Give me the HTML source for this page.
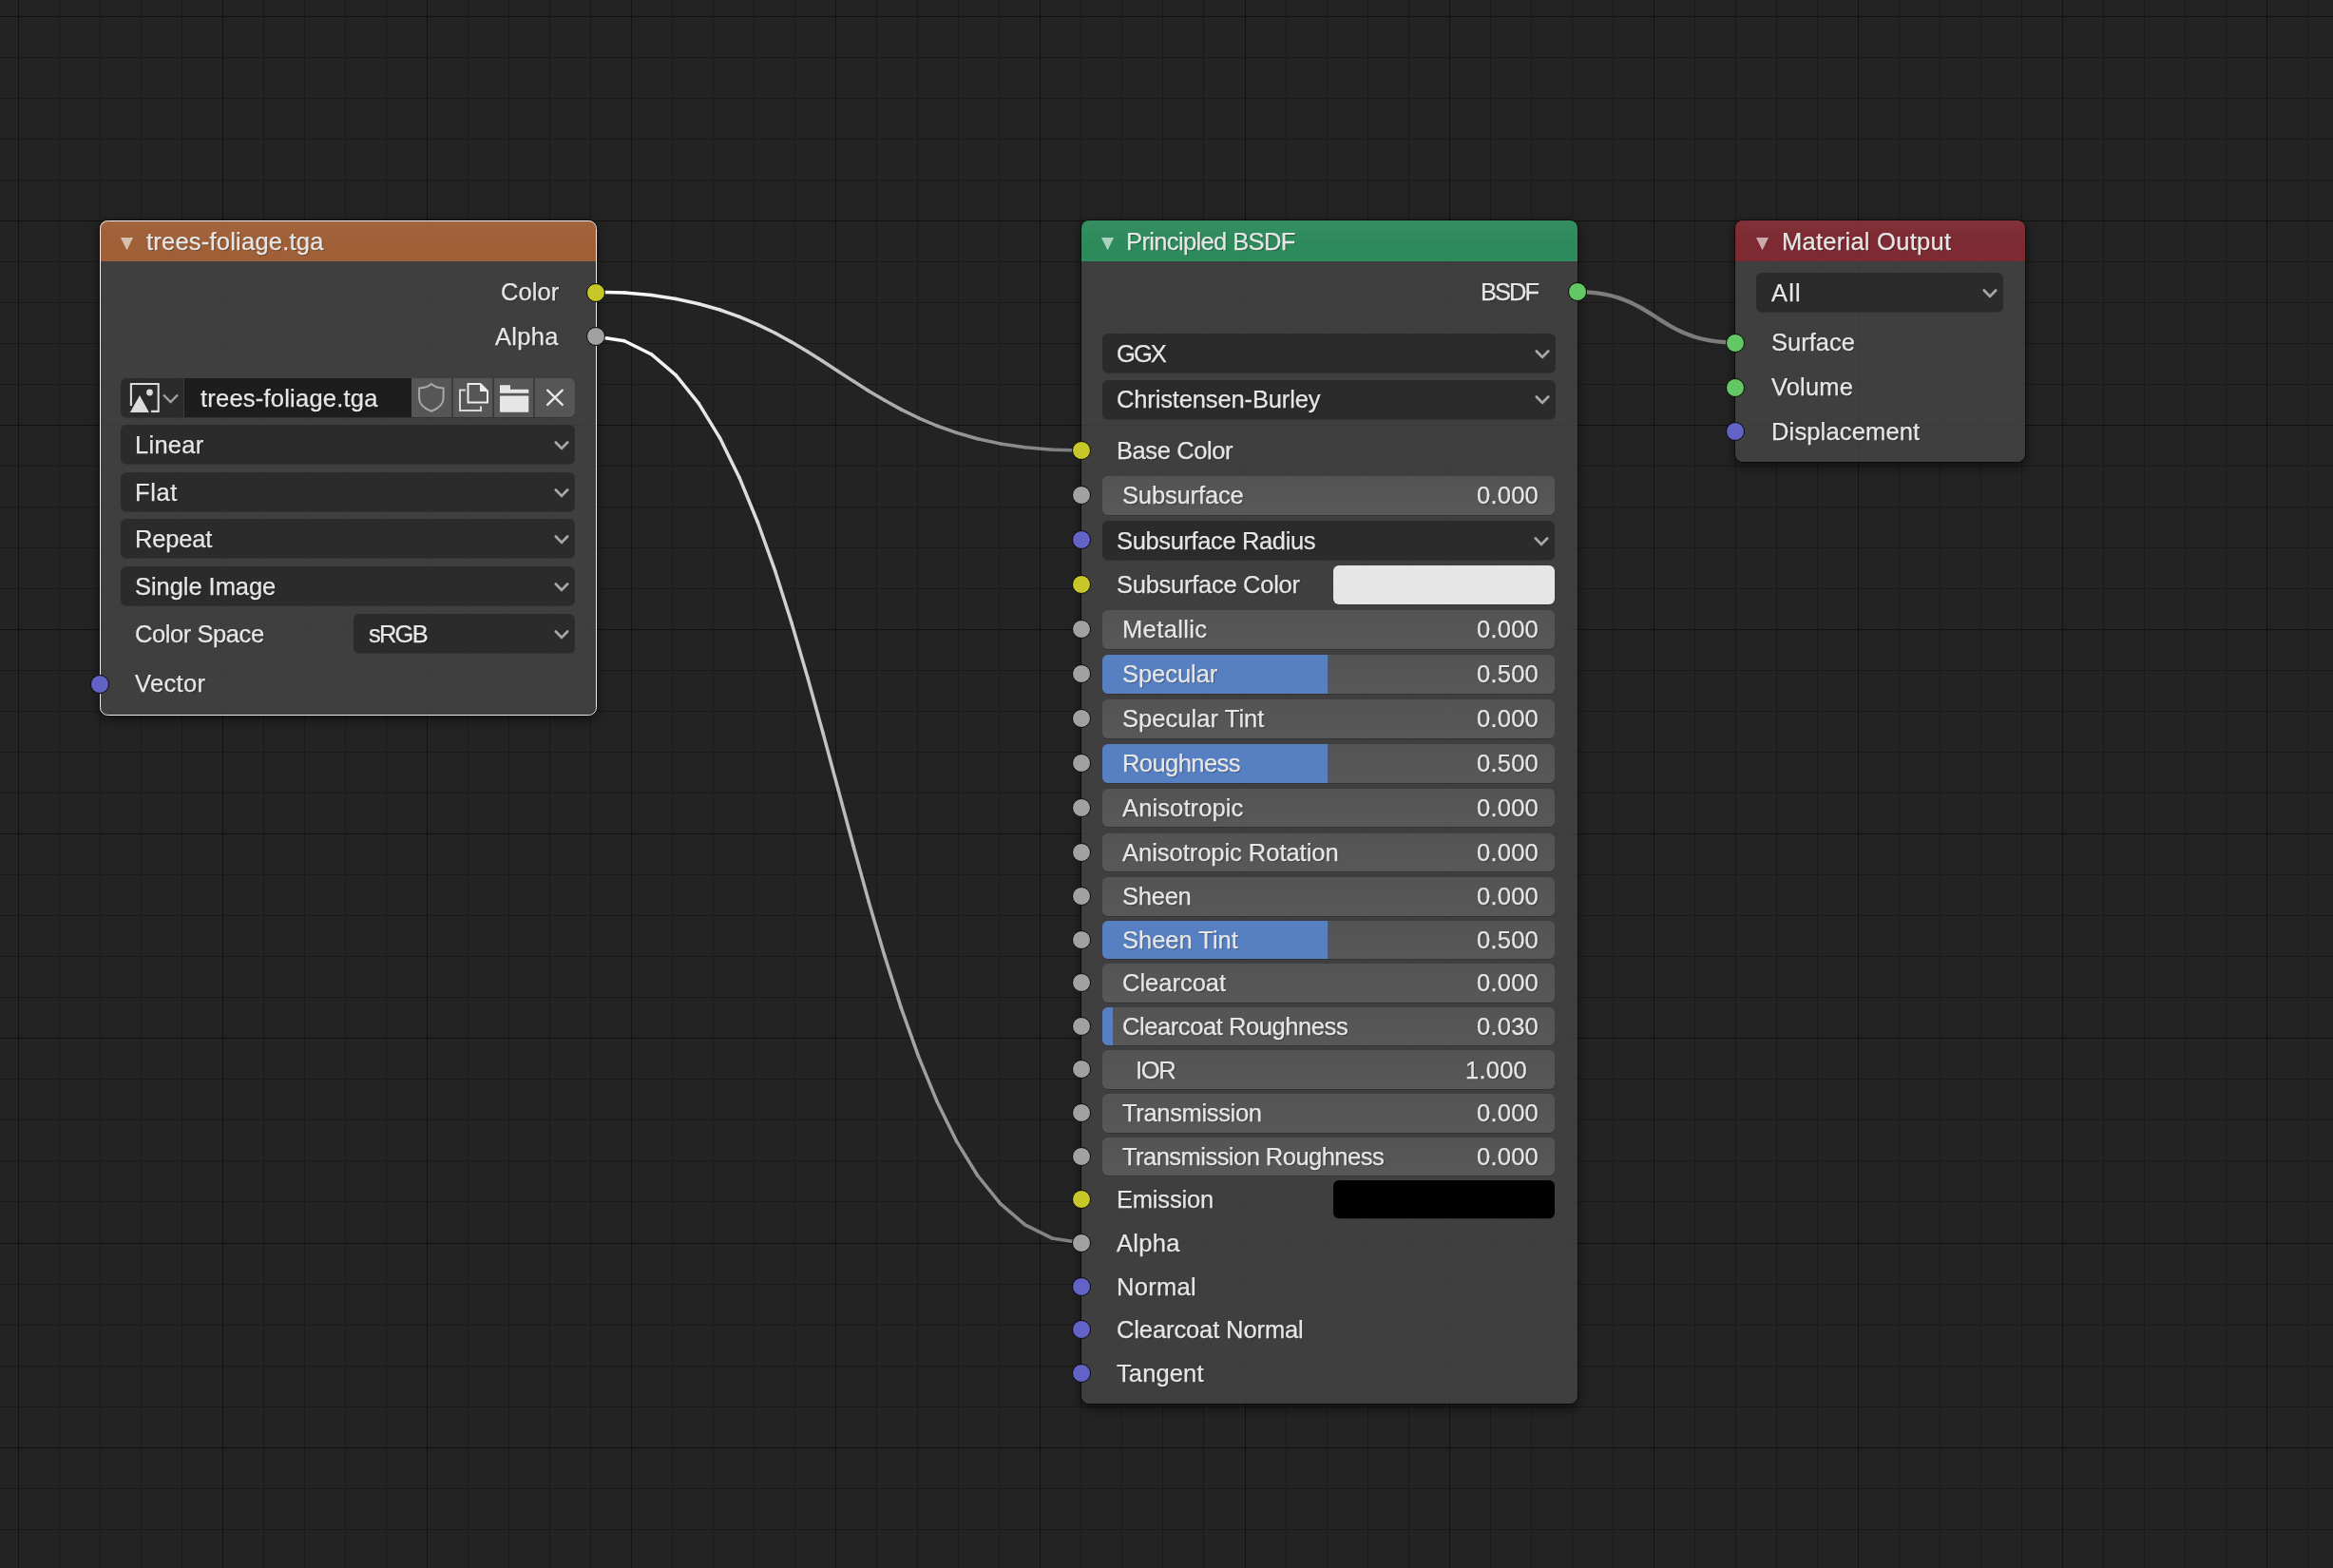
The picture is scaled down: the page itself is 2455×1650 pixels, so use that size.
<!DOCTYPE html><html><head><meta charset="utf-8"><style>
html,body{margin:0;padding:0;width:2455px;height:1650px;overflow:hidden;background:#232323;}
*{box-sizing:border-box;}
.a{position:absolute;}
.t{position:absolute;font-family:"Liberation Sans",sans-serif;font-size:25.5px;letter-spacing:0.2px;color:#e6e6e6;white-space:nowrap;line-height:40px;height:40px;text-shadow:1px 1px 1px rgba(0,0,0,0.35);will-change:transform;-webkit-text-stroke:0.25px #e6e6e6;}
.node{position:absolute;border-radius:8px;box-shadow:0 0 0 1px rgba(0,0,0,0.45),0 4px 10px 2px rgba(0,0,0,0.42);}
.hdr{position:absolute;left:0;top:0;right:0;height:43.4px;border-radius:8px 8px 0 0;}
.bdy{position:absolute;left:0;top:43.4px;right:0;bottom:0;border-radius:0 0 8px 8px;background:rgba(70,70,70,0.8);}
.menu{position:absolute;background:#2b2b2b;border-radius:6px;box-shadow:0 1px 0 rgba(0,0,0,0.18);}
.sl{position:absolute;background:linear-gradient(#545454,#585858);border-radius:6px;overflow:hidden;box-shadow:0 1px 0 rgba(0,0,0,0.18);}
.fill{position:absolute;left:0;top:0;bottom:0;background:#5680c2;}
.sock{position:absolute;width:20px;height:20px;border-radius:50%;border:1.6px solid #0a0a0a;}
.chev{position:absolute;width:16px;height:10px;}

</style></head><body>
<svg class="a" style="left:0;top:0" width="2455" height="1650" shape-rendering="crispEdges"><path d="M62.5 0V1650M105.5 0V1650M148.5 0V1650M191.5 0V1650M277.5 0V1650M320.5 0V1650M363.5 0V1650M406.5 0V1650M492.5 0V1650M535.5 0V1650M578.5 0V1650M621.5 0V1650M707.5 0V1650M750.5 0V1650M793.5 0V1650M836.5 0V1650M922.5 0V1650M965.5 0V1650M1008.5 0V1650M1051.5 0V1650M1137.5 0V1650M1180.5 0V1650M1223.5 0V1650M1266.5 0V1650M1353.5 0V1650M1396.5 0V1650M1439.5 0V1650M1482.5 0V1650M1568.5 0V1650M1611.5 0V1650M1654.5 0V1650M1697.5 0V1650M1783.5 0V1650M1826.5 0V1650M1869.5 0V1650M1912.5 0V1650M1998.5 0V1650M2041.5 0V1650M2084.5 0V1650M2127.5 0V1650M2213.5 0V1650M2256.5 0V1650M2299.5 0V1650M2342.5 0V1650M2428.5 0V1650M0 60.5H2455M0 103.5H2455M0 146.5H2455M0 189.5H2455M0 275.5H2455M0 318.5H2455M0 361.5H2455M0 404.5H2455M0 490.5H2455M0 533.5H2455M0 576.5H2455M0 619.5H2455M0 705.5H2455M0 748.5H2455M0 791.5H2455M0 834.5H2455M0 920.5H2455M0 963.5H2455M0 1006.5H2455M0 1049.5H2455M0 1135.5H2455M0 1178.5H2455M0 1221.5H2455M0 1264.5H2455M0 1351.5H2455M0 1394.5H2455M0 1437.5H2455M0 1480.5H2455M0 1566.5H2455M0 1609.5H2455" stroke="#1a1a1a" stroke-width="1"/><path d="M19.5 0V1650M234.5 0V1650M449.5 0V1650M664.5 0V1650M879.5 0V1650M1094.5 0V1650M1310.5 0V1650M1525.5 0V1650M1740.5 0V1650M1955.5 0V1650M2170.5 0V1650M2385.5 0V1650M0 17.5H2455M0 232.5H2455M0 447.5H2455M0 662.5H2455M0 877.5H2455M0 1092.5H2455M0 1308.5H2455M0 1523.5H2455" stroke="#121212" stroke-width="1"/></svg>
<div class="node" style="left:105px;top:232px;width:522px;height:520px;"><div class="hdr" style="background:linear-gradient(rgba(255,255,255,0.035),rgba(255,255,255,0) 60%),rgba(176,104,58,0.88)"></div><div class="bdy"></div></div>
<div class="a" style="left:104.5px;top:231.5px;width:523px;height:521px;border:1.6px solid #ececec;border-radius:8.5px"></div>
<svg class="a" style="left:126.5px;top:249.7px" width="13.0" height="13.300000000000011"><path d="M0 0H13.0L6.5 13.300000000000011Z" fill="rgba(255,255,255,0.6)"/></svg>
<div class="t" style="left:153.70px;top:233.5px;letter-spacing:0.22px;">trees-foliage.tga</div>
<div class="t" style="right:1866.44px;top:287.3px;letter-spacing:0.06px;">Color</div>
<div class="t" style="right:1867.22px;top:333.9px;letter-spacing:0.28px;">Alpha</div>
<div class="a" style="left:127px;top:398px;width:478px;height:41px;border-radius:6px;overflow:hidden;box-shadow:0 1px 0 rgba(0,0,0,0.18)"><div class="a" style="left:0;top:0;width:66px;height:41px;background:#2b2b2b"></div><div class="a" style="left:66px;top:0;width:1px;height:41px;background:#3a3a3a"></div><div class="a" style="left:67px;top:0;width:239px;height:41px;background:#1d1d1d"></div><div class="a" style="left:306px;top:0;width:42px;height:41px;background:#565656"></div><div class="a" style="left:349px;top:0;width:42px;height:41px;background:#565656"></div><div class="a" style="left:392px;top:0;width:42px;height:41px;background:#565656"></div><div class="a" style="left:435px;top:0;width:43px;height:41px;background:#565656"></div><div class="a" style="left:349px;top:0;width:1px;height:41px;background:#3a3a3a"></div><div class="a" style="left:392px;top:0;width:1px;height:41px;background:#3a3a3a"></div><div class="a" style="left:435px;top:0;width:1px;height:41px;background:#3a3a3a"></div></div>
<svg class="a" style="left:130px;top:398px" width="66" height="41"><path d="M7.9 28.9 V6 H36.7 V34.9 H29" fill="none" stroke="#dcdcdc" stroke-width="2.1"/><path d="M6.9 35.9 L17 18.1 L26.9 35.9 Z" fill="#dcdcdc"/><circle cx="27.5" cy="15" r="3.4" fill="#dcdcdc"/><path d="M42 17.5 L49.5 25 L57 17.5" fill="none" stroke="#a0a0a0" stroke-width="2.4"/></svg>
<div class="t" style="left:210.80px;top:398.5px;letter-spacing:0.22px;">trees-foliage.tga</div>
<svg class="a" style="left:433px;top:398px" width="172" height="41"><path d="M20.9 6 C17.5 9 13 10.3 8.1 10.5 V21 C8.1 27.5 14 32 20.9 34.7 C27.8 32 33.6 27.5 33.6 21 V10.5 C28.8 10.3 24.3 9 20.9 6 Z" fill="none" stroke="#a8a8a8" stroke-width="2"/><path d="M57 12.6 H51 V34 H73 V29.5" fill="none" stroke="#d8d8d8" stroke-width="2"/><path d="M59.5 6 H72.5 L80 13.5 V25.5 H59.5 Z" fill="none" stroke="#ececec" stroke-width="2"/><path d="M72 6 L80 14 H72 Z" fill="#ececec"/><path d="M93 7.3 H104 V11.7 H123.3 V15.8 H93 Z" fill="#e6e6e6"/><rect x="93" y="18.4" width="30.3" height="17.3" rx="0.8" fill="#e6e6e6"/><path d="M143.2 12.7 L158.7 27.9 M158.7 12.7 L143.2 27.9" stroke="#e6e6e6" stroke-width="2.4" stroke-linecap="round"/></svg>
<div class="menu" style="left:127px;top:447px;width:478px;height:41px"></div>
<div class="t" style="left:141.60px;top:447.5px;letter-spacing:0.27px;">Linear</div>
<svg class="a" style="left:581.40px;top:461.50px" width="20" height="14"><path d="M3.8 3.5 L10 9.9 L16.2 3.5" fill="none" stroke="#a8a8a8" stroke-width="2.7" stroke-linecap="round" stroke-linejoin="miter"/></svg>
<div class="menu" style="left:127px;top:497px;width:478px;height:41px"></div>
<div class="t" style="left:141.60px;top:497.5px;letter-spacing:0.62px;">Flat</div>
<svg class="a" style="left:581.40px;top:511.50px" width="20" height="14"><path d="M3.8 3.5 L10 9.9 L16.2 3.5" fill="none" stroke="#a8a8a8" stroke-width="2.7" stroke-linecap="round" stroke-linejoin="miter"/></svg>
<div class="menu" style="left:127px;top:546px;width:478px;height:41px"></div>
<div class="t" style="left:141.60px;top:546.5px;letter-spacing:-0.16px;">Repeat</div>
<svg class="a" style="left:581.40px;top:560.50px" width="20" height="14"><path d="M3.8 3.5 L10 9.9 L16.2 3.5" fill="none" stroke="#a8a8a8" stroke-width="2.7" stroke-linecap="round" stroke-linejoin="miter"/></svg>
<div class="menu" style="left:127px;top:596px;width:478px;height:41px"></div>
<div class="t" style="left:141.60px;top:596.5px;letter-spacing:-0.05px;">Single Image</div>
<svg class="a" style="left:581.40px;top:610.50px" width="20" height="14"><path d="M3.8 3.5 L10 9.9 L16.2 3.5" fill="none" stroke="#a8a8a8" stroke-width="2.7" stroke-linecap="round" stroke-linejoin="miter"/></svg>
<div class="t" style="left:141.60px;top:646.5px;letter-spacing:-0.42px;">Color Space</div>
<div class="menu" style="left:372px;top:646px;width:233px;height:41px"></div>
<div class="t" style="left:388.20px;top:646.5px;letter-spacing:-1.79px;">sRGB</div>
<svg class="a" style="left:581.40px;top:660.50px" width="20" height="14"><path d="M3.8 3.5 L10 9.9 L16.2 3.5" fill="none" stroke="#a8a8a8" stroke-width="2.7" stroke-linecap="round" stroke-linejoin="miter"/></svg>
<div class="node" style="left:1137.5px;top:232px;width:522.0px;height:1244.5px;"><div class="hdr" style="background:linear-gradient(rgba(255,255,255,0.035),rgba(255,255,255,0) 60%),rgba(47,152,99,0.88)"></div><div class="bdy"></div></div>
<svg class="a" style="left:1159.3999999999999px;top:249.7px" width="13.0" height="13.300000000000011"><path d="M0 0H13.0L6.5 13.300000000000011Z" fill="rgba(255,255,255,0.6)"/></svg>
<div class="t" style="left:1184.90px;top:233.5px;letter-spacing:-0.63px;">Principled BSDF</div>
<div class="t" style="right:837.51px;top:287px;letter-spacing:-2.01px;">BSDF</div>
<div class="menu" style="left:1160px;top:351px;width:477px;height:41px"></div>
<div class="t" style="left:1175.20px;top:351.5px;letter-spacing:-1.95px;">GGX</div>
<svg class="a" style="left:1613.40px;top:365.50px" width="20" height="14"><path d="M3.8 3.5 L10 9.9 L16.2 3.5" fill="none" stroke="#a8a8a8" stroke-width="2.7" stroke-linecap="round" stroke-linejoin="miter"/></svg>
<div class="menu" style="left:1160px;top:400px;width:477px;height:40.5px"></div>
<div class="t" style="left:1175.20px;top:400.25px;letter-spacing:-0.14px;">Christensen-Burley</div>
<svg class="a" style="left:1613.40px;top:414.25px" width="20" height="14"><path d="M3.8 3.5 L10 9.9 L16.2 3.5" fill="none" stroke="#a8a8a8" stroke-width="2.7" stroke-linecap="round" stroke-linejoin="miter"/></svg>
<div class="t" style="left:1175.20px;top:454.1px;letter-spacing:-0.41px;">Base Color</div>
<div class="sl" style="left:1160px;top:500.90000000000003px;width:476px;height:40.69999999999999px"></div>
<div class="t" style="left:1181.20px;top:501.25px;letter-spacing:-0.14px;">Subsurface</div>
<div class="t" style="right:835.86px;top:501.25px;letter-spacing:0.24px;">0.000</div>
<div class="menu" style="left:1160px;top:548.3px;width:476px;height:40.700000000000045px"></div>
<div class="t" style="left:1175.20px;top:548.65px;letter-spacing:-0.37px;">Subsurface Radius</div>
<svg class="a" style="left:1612.40px;top:562.65px" width="20" height="14"><path d="M3.8 3.5 L10 9.9 L16.2 3.5" fill="none" stroke="#a8a8a8" stroke-width="2.7" stroke-linecap="round" stroke-linejoin="miter"/></svg>
<div class="t" style="left:1175.20px;top:595.0px;letter-spacing:-0.27px;">Subsurface Color</div>
<div class="a" style="left:1403px;top:595.3px;width:233px;height:40.5px;border-radius:6px;background:#e6e6e6;box-shadow:0 1px 0 rgba(0,0,0,0.18)"></div>
<div class="sl" style="left:1160px;top:642.0999999999999px;width:476px;height:40.700000000000045px"></div>
<div class="t" style="left:1181.20px;top:642.4499999999999px;letter-spacing:0.38px;">Metallic</div>
<div class="t" style="right:835.86px;top:642.4499999999999px;letter-spacing:0.24px;">0.000</div>
<div class="sl" style="left:1160px;top:688.9px;width:476px;height:40.700000000000045px"><div class="fill" style="width:237.0px"></div></div>
<div class="t" style="left:1181.20px;top:689.25px;letter-spacing:-0.04px;">Specular</div>
<div class="t" style="right:835.86px;top:689.25px;letter-spacing:0.24px;">0.500</div>
<div class="sl" style="left:1160px;top:736.0999999999999px;width:476px;height:40.700000000000045px"></div>
<div class="t" style="left:1181.20px;top:736.4499999999999px;letter-spacing:0.05px;">Specular Tint</div>
<div class="t" style="right:835.86px;top:736.4499999999999px;letter-spacing:0.24px;">0.000</div>
<div class="sl" style="left:1160px;top:783.0999999999999px;width:476px;height:40.700000000000045px"><div class="fill" style="width:237.0px"></div></div>
<div class="t" style="left:1181.20px;top:783.4499999999999px;letter-spacing:-0.56px;">Roughness</div>
<div class="t" style="right:835.86px;top:783.4499999999999px;letter-spacing:0.24px;">0.500</div>
<div class="sl" style="left:1160px;top:829.5999999999999px;width:476px;height:40.700000000000045px"></div>
<div class="t" style="left:1181.20px;top:829.9499999999999px;letter-spacing:0.12px;">Anisotropic</div>
<div class="t" style="right:835.86px;top:829.9499999999999px;letter-spacing:0.24px;">0.000</div>
<div class="sl" style="left:1160px;top:876.5999999999999px;width:476px;height:40.700000000000045px"></div>
<div class="t" style="left:1181.20px;top:876.9499999999999px;letter-spacing:-0.03px;">Anisotropic Rotation</div>
<div class="t" style="right:835.86px;top:876.9499999999999px;letter-spacing:0.24px;">0.000</div>
<div class="sl" style="left:1160px;top:923.0px;width:476px;height:40.700000000000045px"></div>
<div class="t" style="left:1181.20px;top:923.35px;letter-spacing:-0.24px;">Sheen</div>
<div class="t" style="right:835.86px;top:923.35px;letter-spacing:0.24px;">0.000</div>
<div class="sl" style="left:1160px;top:968.5px;width:476px;height:40.700000000000045px"><div class="fill" style="width:237.0px"></div></div>
<div class="t" style="left:1181.20px;top:968.85px;letter-spacing:-0.01px;">Sheen Tint</div>
<div class="t" style="right:835.86px;top:968.85px;letter-spacing:0.24px;">0.500</div>
<div class="sl" style="left:1160px;top:1014.0999999999999px;width:476px;height:40.700000000000045px"></div>
<div class="t" style="left:1181.20px;top:1014.4499999999998px;letter-spacing:-0.01px;">Clearcoat</div>
<div class="t" style="right:835.86px;top:1014.4499999999998px;letter-spacing:0.24px;">0.000</div>
<div class="sl" style="left:1160px;top:1059.8px;width:476px;height:40.700000000000045px"><div class="fill" style="width:10.9px"></div></div>
<div class="t" style="left:1181.20px;top:1060.15px;letter-spacing:-0.42px;">Clearcoat Roughness</div>
<div class="t" style="right:835.86px;top:1060.15px;letter-spacing:0.24px;">0.030</div>
<div class="sl" style="left:1160px;top:1105.3999999999999px;width:476px;height:40.700000000000045px"></div>
<div class="t" style="left:1194.90px;top:1105.75px;letter-spacing:-1.37px;">IOR</div>
<div class="t" style="right:847.86px;top:1105.75px;letter-spacing:0.24px;">1.000</div>
<div class="sl" style="left:1160px;top:1151.0px;width:476px;height:40.700000000000045px"></div>
<div class="t" style="left:1181.20px;top:1151.35px;letter-spacing:-0.34px;">Transmission</div>
<div class="t" style="right:835.86px;top:1151.35px;letter-spacing:0.24px;">0.000</div>
<div class="sl" style="left:1160px;top:1196.6px;width:476px;height:40.700000000000045px"></div>
<div class="t" style="left:1181.20px;top:1196.9499999999998px;letter-spacing:-0.53px;">Transmission Roughness</div>
<div class="t" style="right:835.86px;top:1196.9499999999998px;letter-spacing:0.24px;">0.000</div>
<div class="t" style="left:1175.20px;top:1241.6px;letter-spacing:-0.19px;">Emission</div>
<div class="a" style="left:1403px;top:1241.8999999999999px;width:233px;height:40.5px;border-radius:6px;background:#000000;box-shadow:0 1px 0 rgba(0,0,0,0.18)"></div>
<div class="t" style="left:1175.20px;top:1287.7px;letter-spacing:0.28px;">Alpha</div>
<div class="t" style="left:1175.20px;top:1333.5px;letter-spacing:0.28px;">Normal</div>
<div class="t" style="left:1175.20px;top:1378.8px;letter-spacing:-0.11px;">Clearcoat Normal</div>
<div class="t" style="left:1175.20px;top:1424.5px;letter-spacing:0.12px;">Tangent</div>
<div class="node" style="left:1826px;top:232px;width:305px;height:254.39999999999998px;"><div class="hdr" style="background:linear-gradient(rgba(255,255,255,0.035),rgba(255,255,255,0) 60%),rgba(138,43,52,0.88)"></div><div class="bdy"></div></div>
<svg class="a" style="left:1847.5px;top:249.7px" width="13.0" height="13.300000000000011"><path d="M0 0H13.0L6.5 13.300000000000011Z" fill="rgba(255,255,255,0.6)"/></svg>
<div class="t" style="left:1874.50px;top:233.5px;letter-spacing:0.26px;">Material Output</div>
<div class="menu" style="left:1848px;top:287px;width:259.5999999999999px;height:41px"></div>
<div class="t" style="left:1864.10px;top:287.5px;letter-spacing:1.14px;">All</div>
<svg class="a" style="left:2084.00px;top:301.50px" width="20" height="14"><path d="M3.8 3.5 L10 9.9 L16.2 3.5" fill="none" stroke="#a8a8a8" stroke-width="2.7" stroke-linecap="round" stroke-linejoin="miter"/></svg>
<div class="t" style="left:1864.30px;top:340.4px;letter-spacing:-0.00px;">Surface</div>
<div class="t" style="left:1864.30px;top:387.2px;letter-spacing:0.16px;">Volume</div>
<div class="t" style="left:1864.30px;top:434px;letter-spacing:0.15px;">Displacement</div>
<svg class="a" style="left:0;top:0" width="2455" height="1650"><line x1="626.5" y1="307.3" x2="657.1" y2="308.1" stroke="#fcfcfc" stroke-width="3.5" stroke-linecap="round"/><line x1="657.1" y1="308.1" x2="685.3" y2="310.6" stroke="#f7f7f7" stroke-width="3.5" stroke-linecap="round"/><line x1="685.3" y1="310.6" x2="711.3" y2="314.5" stroke="#f1f1f1" stroke-width="3.5" stroke-linecap="round"/><line x1="711.3" y1="314.5" x2="735.3" y2="319.7" stroke="#ececec" stroke-width="3.5" stroke-linecap="round"/><line x1="735.3" y1="319.7" x2="757.5" y2="326.0" stroke="#e7e7e7" stroke-width="3.5" stroke-linecap="round"/><line x1="757.5" y1="326.0" x2="778.2" y2="333.4" stroke="#e1e1e1" stroke-width="3.5" stroke-linecap="round"/><line x1="778.2" y1="333.4" x2="797.5" y2="341.6" stroke="#dcdcdc" stroke-width="3.5" stroke-linecap="round"/><line x1="797.5" y1="341.6" x2="815.8" y2="350.5" stroke="#d6d6d6" stroke-width="3.5" stroke-linecap="round"/><line x1="815.8" y1="350.5" x2="833.1" y2="360.1" stroke="#d1d1d1" stroke-width="3.5" stroke-linecap="round"/><line x1="833.1" y1="360.1" x2="849.8" y2="370.0" stroke="#cccccc" stroke-width="3.5" stroke-linecap="round"/><line x1="849.8" y1="370.0" x2="866.0" y2="380.3" stroke="#c6c6c6" stroke-width="3.5" stroke-linecap="round"/><line x1="866.0" y1="380.3" x2="882.0" y2="390.7" stroke="#c1c1c1" stroke-width="3.5" stroke-linecap="round"/><line x1="882.0" y1="390.7" x2="898.0" y2="401.1" stroke="#bbbbbb" stroke-width="3.5" stroke-linecap="round"/><line x1="898.0" y1="401.1" x2="914.2" y2="411.4" stroke="#b6b6b6" stroke-width="3.5" stroke-linecap="round"/><line x1="914.2" y1="411.4" x2="930.9" y2="421.3" stroke="#b0b0b0" stroke-width="3.5" stroke-linecap="round"/><line x1="930.9" y1="421.3" x2="948.2" y2="430.9" stroke="#ababab" stroke-width="3.5" stroke-linecap="round"/><line x1="948.2" y1="430.9" x2="966.5" y2="439.8" stroke="#a6a6a6" stroke-width="3.5" stroke-linecap="round"/><line x1="966.5" y1="439.8" x2="985.8" y2="448.0" stroke="#a0a0a0" stroke-width="3.5" stroke-linecap="round"/><line x1="985.8" y1="448.0" x2="1006.5" y2="455.4" stroke="#9b9b9b" stroke-width="3.5" stroke-linecap="round"/><line x1="1006.5" y1="455.4" x2="1028.7" y2="461.7" stroke="#959595" stroke-width="3.5" stroke-linecap="round"/><line x1="1028.7" y1="461.7" x2="1052.7" y2="466.9" stroke="#909090" stroke-width="3.5" stroke-linecap="round"/><line x1="1052.7" y1="466.9" x2="1078.7" y2="470.8" stroke="#8b8b8b" stroke-width="3.5" stroke-linecap="round"/><line x1="1078.7" y1="470.8" x2="1106.9" y2="473.3" stroke="#858585" stroke-width="3.5" stroke-linecap="round"/><line x1="1106.9" y1="473.3" x2="1137.5" y2="474.1" stroke="#808080" stroke-width="3.5" stroke-linecap="round"/><line x1="626.5" y1="353.9" x2="657.1" y2="358.7" stroke="#fcfcfc" stroke-width="3.5" stroke-linecap="round"/><line x1="657.1" y1="358.7" x2="685.3" y2="372.7" stroke="#f7f7f7" stroke-width="3.5" stroke-linecap="round"/><line x1="685.3" y1="372.7" x2="711.3" y2="394.9" stroke="#f1f1f1" stroke-width="3.5" stroke-linecap="round"/><line x1="711.3" y1="394.9" x2="735.3" y2="424.6" stroke="#ececec" stroke-width="3.5" stroke-linecap="round"/><line x1="735.3" y1="424.6" x2="757.5" y2="460.8" stroke="#e7e7e7" stroke-width="3.5" stroke-linecap="round"/><line x1="757.5" y1="460.8" x2="778.2" y2="502.9" stroke="#e1e1e1" stroke-width="3.5" stroke-linecap="round"/><line x1="778.2" y1="502.9" x2="797.5" y2="550.0" stroke="#dcdcdc" stroke-width="3.5" stroke-linecap="round"/><line x1="797.5" y1="550.0" x2="815.8" y2="601.2" stroke="#d6d6d6" stroke-width="3.5" stroke-linecap="round"/><line x1="815.8" y1="601.2" x2="833.1" y2="655.7" stroke="#d1d1d1" stroke-width="3.5" stroke-linecap="round"/><line x1="833.1" y1="655.7" x2="849.8" y2="712.7" stroke="#cccccc" stroke-width="3.5" stroke-linecap="round"/><line x1="849.8" y1="712.7" x2="866.0" y2="771.3" stroke="#c6c6c6" stroke-width="3.5" stroke-linecap="round"/><line x1="866.0" y1="771.3" x2="882.0" y2="830.8" stroke="#c1c1c1" stroke-width="3.5" stroke-linecap="round"/><line x1="882.0" y1="830.8" x2="898.0" y2="890.3" stroke="#bbbbbb" stroke-width="3.5" stroke-linecap="round"/><line x1="898.0" y1="890.3" x2="914.2" y2="948.9" stroke="#b6b6b6" stroke-width="3.5" stroke-linecap="round"/><line x1="914.2" y1="948.9" x2="930.9" y2="1005.9" stroke="#b0b0b0" stroke-width="3.5" stroke-linecap="round"/><line x1="930.9" y1="1005.9" x2="948.2" y2="1060.4" stroke="#ababab" stroke-width="3.5" stroke-linecap="round"/><line x1="948.2" y1="1060.4" x2="966.5" y2="1111.6" stroke="#a6a6a6" stroke-width="3.5" stroke-linecap="round"/><line x1="966.5" y1="1111.6" x2="985.8" y2="1158.7" stroke="#a0a0a0" stroke-width="3.5" stroke-linecap="round"/><line x1="985.8" y1="1158.7" x2="1006.5" y2="1200.8" stroke="#9b9b9b" stroke-width="3.5" stroke-linecap="round"/><line x1="1006.5" y1="1200.8" x2="1028.7" y2="1237.0" stroke="#959595" stroke-width="3.5" stroke-linecap="round"/><line x1="1028.7" y1="1237.0" x2="1052.7" y2="1266.7" stroke="#909090" stroke-width="3.5" stroke-linecap="round"/><line x1="1052.7" y1="1266.7" x2="1078.7" y2="1288.9" stroke="#8b8b8b" stroke-width="3.5" stroke-linecap="round"/><line x1="1078.7" y1="1288.9" x2="1106.9" y2="1302.9" stroke="#858585" stroke-width="3.5" stroke-linecap="round"/><line x1="1106.9" y1="1302.9" x2="1137.5" y2="1307.7" stroke="#808080" stroke-width="3.5" stroke-linecap="round"/><polyline points="1659.3,307.0 1669.3,307.3 1678.5,308.1 1687.0,309.3 1694.8,311.0 1702.0,313.0 1708.8,315.4 1715.1,318.0 1721.0,320.9 1726.7,323.9 1732.1,327.1 1737.4,330.4 1742.7,333.8 1747.9,337.1 1753.2,340.4 1758.6,343.6 1764.3,346.6 1770.2,349.5 1776.5,352.1 1783.3,354.5 1790.5,356.5 1798.3,358.2 1806.8,359.4 1816.0,360.2 1826.0,360.5" fill="none" stroke="rgb(125, 125, 125)" stroke-width="4.3" stroke-linejoin="round" stroke-linecap="round"/></svg>
<div class="sock" style="left:616.9px;top:297.6px;background:#c7c729"></div>
<div class="sock" style="left:616.9px;top:344.2px;background:#a1a1a1"></div>
<div class="sock" style="left:95.4px;top:709.6999999999999px;background:#6363c7"></div>
<div class="sock" style="left:1649.7px;top:297.3px;background:#63c763"></div>
<div class="sock" style="left:1816.4px;top:350.7px;background:#63c763"></div>
<div class="sock" style="left:1816.4px;top:397.5px;background:#63c763"></div>
<div class="sock" style="left:1816.4px;top:444.3px;background:#6363c7"></div>
<div class="sock" style="left:1127.9px;top:464.40000000000003px;background:#c7c729"></div>
<div class="sock" style="left:1127.9px;top:510.90000000000003px;background:#a1a1a1"></div>
<div class="sock" style="left:1127.9px;top:558.3px;background:#6363c7"></div>
<div class="sock" style="left:1127.9px;top:605.3px;background:#c7c729"></div>
<div class="sock" style="left:1127.9px;top:652.0999999999999px;background:#a1a1a1"></div>
<div class="sock" style="left:1127.9px;top:698.9px;background:#a1a1a1"></div>
<div class="sock" style="left:1127.9px;top:746.0999999999999px;background:#a1a1a1"></div>
<div class="sock" style="left:1127.9px;top:793.0999999999999px;background:#a1a1a1"></div>
<div class="sock" style="left:1127.9px;top:839.5999999999999px;background:#a1a1a1"></div>
<div class="sock" style="left:1127.9px;top:886.5999999999999px;background:#a1a1a1"></div>
<div class="sock" style="left:1127.9px;top:933.0px;background:#a1a1a1"></div>
<div class="sock" style="left:1127.9px;top:978.5px;background:#a1a1a1"></div>
<div class="sock" style="left:1127.9px;top:1024.1px;background:#a1a1a1"></div>
<div class="sock" style="left:1127.9px;top:1069.8px;background:#a1a1a1"></div>
<div class="sock" style="left:1127.9px;top:1115.3999999999999px;background:#a1a1a1"></div>
<div class="sock" style="left:1127.9px;top:1161.0px;background:#a1a1a1"></div>
<div class="sock" style="left:1127.9px;top:1206.6px;background:#a1a1a1"></div>
<div class="sock" style="left:1127.9px;top:1251.8999999999999px;background:#c7c729"></div>
<div class="sock" style="left:1127.9px;top:1298.0px;background:#a1a1a1"></div>
<div class="sock" style="left:1127.9px;top:1343.8px;background:#6363c7"></div>
<div class="sock" style="left:1127.9px;top:1389.1px;background:#6363c7"></div>
<div class="sock" style="left:1127.9px;top:1434.8px;background:#6363c7"></div>
<div class="t" style="left:141.60px;top:699.4px;letter-spacing:0.34px;">Vector</div>
</body></html>
